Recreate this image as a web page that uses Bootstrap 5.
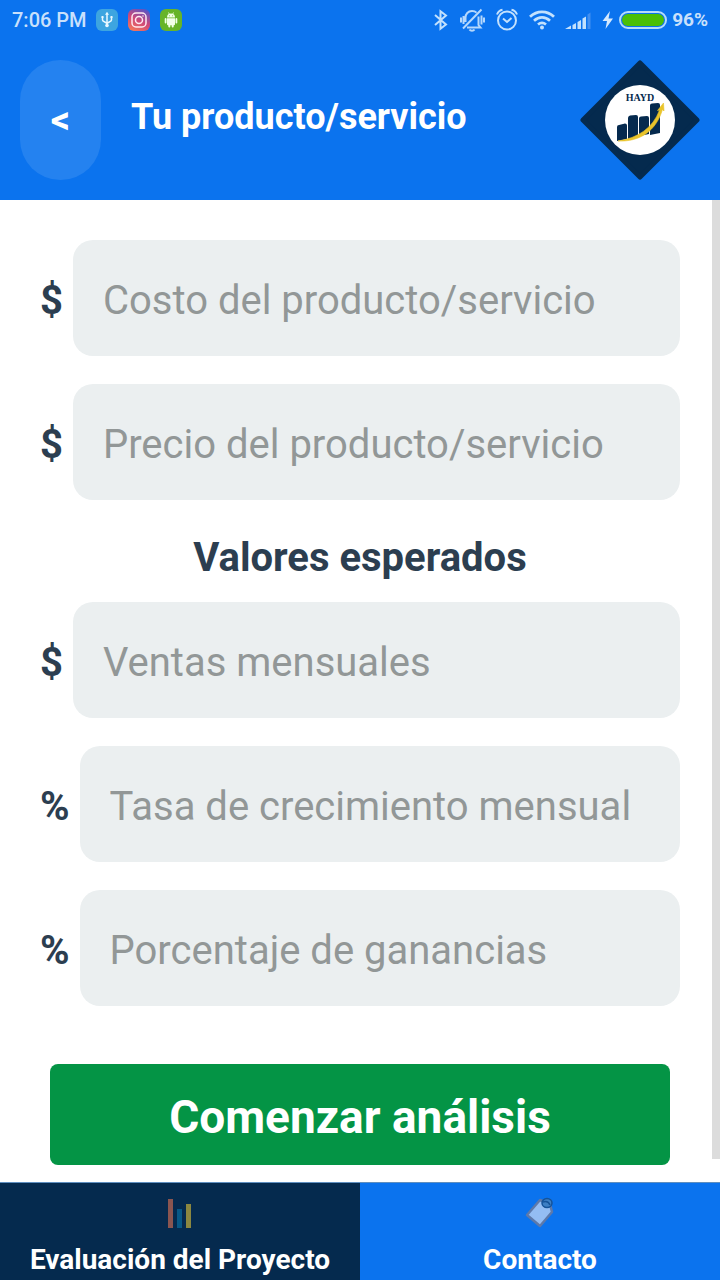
<!DOCTYPE html>
<html lang="es">
<head>
<meta charset="utf-8">
<meta name="viewport" content="width=device-width, initial-scale=1">
<title>Tu producto/servicio</title>
<link href="https://cdn.jsdelivr.net/npm/bootstrap@5.3.0/dist/css/bootstrap.min.css" rel="stylesheet">
<style>
  :root { --azul: #0b73ee; --marino: #052a4e; --tinta: #2c3e50; }
  body { font-family: Roboto, "Noto Sans", sans-serif; color: var(--tinta); background: #fff; }
  .top-area { background: var(--azul); color: #fff; }
  .status-bar { height: 40px; padding: 0 12px; font-size: 20px; line-height: 40px; font-weight: 500; color: #c9e0fb; }
  .status-bar svg { display: block; flex: none; }
  .status-group { gap: 8px; }
  .status-icons { gap: 10px; }
  .battery-level { font-size: 19px; font-weight: 700; }
  .battery { gap: 5px; }
  .app-bar { padding: 20px; gap: 30px; }
  .back-btn { width: 81px; height: 120px; border-radius: 41px; background: #2482f0; color: #fff; font-size: 38px; line-height: 40px; font-weight: 700; }
  .back-btn:hover { background: #3a8ff2; color: #fff; }
  .screen-title { font-size: 36px; line-height: 48px; font-weight: 700; padding-bottom: 6px; }
  .form-area { padding: 40px 40px 17px; }
  .scroll-thumb { width: 8px; top: 0; right: 0; bottom: 23px; background: #dcdcdc; }
  .field-row { gap: 10px; margin-bottom: 28px; }
  .field-row label { font-size: 40px; line-height: 48px; font-weight: 700; padding-top: 6px; }
  .field-row .form-control { height: 116px; padding: 4px 30px 0; border: 0; border-radius: 20px; background: #ebeff0; color: var(--tinta); font-size: 40px; line-height: 48px; }
  .field-row .form-control::placeholder { color: #929797; opacity: 1; }
  .section-title { font-size: 40px; line-height: 60px; font-weight: 700; margin-bottom: 14px; }
  .start-btn { height: 101px; border-radius: 8px; background: #049445; color: #fff; font-size: 46px; line-height: 56px; font-weight: 700; padding: 4px 0 0; }
  .start-btn:hover { background: #037f3b; color: #fff; }
  .start-wrap { padding: 30px 10px 0; }
  .tab-bar { border-top: 1px solid #5f8fc0; }
  .tab-link { background: var(--azul); color: #fff; font-size: 28px; line-height: 36px; font-weight: 700; padding: 12px 0 2px; gap: 11px; }
  .tab-link.active { background: var(--marino); }
</style>
</head>
<body class="d-flex flex-column min-vh-100">
<header class="top-area">
  <div class="status-bar d-flex align-items-center justify-content-between">
    <div class="status-group d-flex align-items-center">
      <span>7:06 PM</span>
      <svg width="24" height="24" viewBox="0 0 24 24" fill="none" stroke="#e8f8ff" stroke-width="1.5"><rect x="1" y="1" width="22" height="22" rx="6" fill="#3da5e0" stroke="none"/><path d="M12 6v11M7.500 9v3c0 2 4.500 2 4.500 4M16.500 9v3c0 2-4.500 2-4.500 4"/><path d="M12 3.800l2 3h-4zM6.500 8h2v2h-2zM15.500 8h2v2h-2z" fill="#e8f8ff" stroke="none"/><circle cx="12" cy="17.500" r="1.800" fill="#e8f8ff" stroke="none"/></svg>
      <svg width="24" height="24" viewBox="0 0 24 24" fill="none" stroke="#ffe9f0" stroke-width="1.500"><defs><linearGradient id="ig" x1=".2" y1="1" x2=".7" y2="0"><stop offset="0" stop-color="#f5785a"/><stop offset=".5" stop-color="#ce4879"/><stop offset="1" stop-color="#5a55c4"/></linearGradient></defs><rect x="1" y="1" width="22" height="22" rx="6" fill="url(#ig)" stroke="none"/><rect x="5" y="5" width="14" height="14" rx="4"/><circle cx="12" cy="12" r="3.500"/><circle cx="16" cy="8" r=".8" fill="#ffe9f0" stroke="none"/></svg>
      <svg width="24" height="24" viewBox="0 0 24 24" fill="#f2ffe8"><rect x="1" y="1" width="22" height="22" rx="6" fill="#67b428"/><path d="M8 9.500a4 4 0 0 1 8 0zM8 10.200h8v6a1 1 0 0 1-1 1H9a1 1 0 0 1-1-1z"/><rect x="5.700" y="10" width="1.800" height="5.500" rx=".9"/><rect x="16.500" y="10" width="1.800" height="5.500" rx=".9"/><rect x="9.300" y="15.500" width="2" height="4" rx="1"/><rect x="12.700" y="15.500" width="2" height="4" rx="1"/><path d="M9.500 4.500l1 2M14.500 4.500l-1 2" stroke="#f2ffe8" stroke-width=".8"/><circle cx="10.400" cy="7.800" r=".5" fill="#67b428"/><circle cx="13.600" cy="7.800" r=".5" fill="#67b428"/></svg>
    </div>
    <div class="status-icons d-flex align-items-center">
      <svg width="16" height="24" viewBox="0 0 16 24" fill="none" stroke="#c3e1fd" stroke-width="2"><path d="M2 7l11 9.500-5.500 4.300V3.200L13 7.500 2 17"/></svg>
      <svg width="26" height="24" viewBox="0 0 26 24" fill="none" stroke="#b5d8fc" stroke-width="2"><path d="M6.500 14V9.500C6.500 6 9 3 13 3c2 0 3.500.6 4.500 1.600M19.500 8.500V17l2 2.500H8M22.500 1.500L4 20.500M10.500 21.500c1 1.500 4 1.500 5 0M4.500 8v8M2 9.500v5M22.500 7.500v9M25 9.500v5"/></svg>
      <svg width="24" height="24" viewBox="0 0 24 24" fill="none" stroke="#c3e1fd" stroke-width="2"><circle cx="12" cy="12.500" r="9"/><path d="M8 10.500l4 3.500 4.500-4M2 6.500C3 4 5 2.200 7.500 1.800M22 6.500C21 4 19 2.200 16.500 1.800"/></svg>
      <svg width="26" height="24" viewBox="1 0 26 24" fill="none" stroke="#c3e1fd" stroke-width="2.800"><path d="M2 8.800C9 2.200 19 2.200 26 8.800M6 12.700c5-4.300 11-4.300 16 0M10 16.500c2.500-2 5.500-2 8 0"/><circle cx="14" cy="19.500" r="2" fill="#c3e1fd" stroke="none"/></svg>
      <svg width="27" height="24" viewBox="0 0 27 24" fill="#c3e1fd"><path d="M0 21l6-3.500V21zM7.500 17l3.500-2v6H7.500zM12.500 14l3.500-2v9h-3.500zM17.500 10.500l3.500-2V21h-3.500z"/><path d="M22.500 6.500l3-2V21h-3z" fill="#438ff0"/></svg>
      <div class="battery d-flex align-items-center">
        <svg width="12" height="24" viewBox="2 0 12 24" fill="#d5e9fe"><path d="M10 3L2.500 13H7l-1.500 8L13 10.500H8.500z"/></svg>
        <svg width="48" height="24" viewBox="1 0 48 24"><rect x="2" y="4" width="46" height="16" rx="8" fill="none" stroke="#b5dcfb" stroke-width="2"/><rect x="4" y="6" width="42" height="12" rx="6" fill="#4abf06"/></svg>
        <span class="battery-level">96%</span>
      </div>
    </div>
  </div>
  <div class="app-bar d-flex align-items-center">
    <button type="button" class="btn back-btn border-0 p-0 flex-shrink-0" aria-label="Volver">&lt;</button>
    <h1 class="screen-title flex-grow-1 mb-0">Tu producto/servicio</h1>
    <svg class="flex-shrink-0" width="120" height="120" viewBox="0 0 120 120" role="img" aria-label="HAYD">
      <path d="M60 3L117 60 60 117 3 60z" fill="#052a4e" stroke="#052a4e" stroke-width="5" stroke-linejoin="round"/>
      <circle cx="60" cy="60" r="35" fill="#fff"/>
      <text x="60" y="41" text-anchor="middle" font-family="Liberation Serif, serif" font-weight="700" font-size="10" fill="#052a4e">HAYD</text>
      <path d="M37 67q0-2 2-2l6-1.500q2 0 2 2V79l-10 2zM48 58q0-2 2-2.500l6-.5q2 0 2 2v20l-10 2zM59 58.500q0-2 2-2l6-.5q2 0 2 2v16l-10 2zM70 45.500q0-2 2-2l6-.5q2 0 2 2v28l-10 2z" fill="#052a4e"/>
      <path d="M38 81C58 78 73 68 79.500 50l-2 .5L83.500 43 84 51l-1.500-1.500C76 71 60 82 38 81z" fill="#eac42a" stroke="#eac42a" stroke-width=".6"/>
    </svg>
  </div>
</header>

<main class="form-area position-relative flex-grow-1">
  <form>
    <div class="field-row d-flex align-items-center">
      <label for="costo">$</label>
      <input id="costo" type="text" inputmode="decimal" class="form-control" placeholder="Costo del producto/servicio">
    </div>
    <div class="field-row d-flex align-items-center">
      <label for="precio">$</label>
      <input id="precio" type="text" inputmode="decimal" class="form-control" placeholder="Precio del producto/servicio">
    </div>
    <h2 class="section-title text-center">Valores esperados</h2>
    <div class="field-row d-flex align-items-center">
      <label for="ventas">$</label>
      <input id="ventas" type="text" inputmode="decimal" class="form-control" placeholder="Ventas mensuales">
    </div>
    <div class="field-row d-flex align-items-center">
      <label for="tasa">%</label>
      <input id="tasa" type="text" inputmode="decimal" class="form-control" placeholder="Tasa de crecimiento mensual">
    </div>
    <div class="field-row d-flex align-items-center">
      <label for="ganancias">%</label>
      <input id="ganancias" type="text" inputmode="decimal" class="form-control" placeholder="Porcentaje de ganancias">
    </div>
    <div class="start-wrap">
      <button type="submit" class="btn start-btn d-block border-0 w-100">Comenzar análisis</button>
    </div>
  </form>
  <div class="scroll-thumb position-absolute"></div>
</main>

<nav class="tab-bar row g-0">
  <a href="#evaluacion" class="tab-link active col-6 d-flex flex-column align-items-center text-decoration-none" aria-current="page">
    <svg width="32" height="36" viewBox="0 0 32 36"><path d="M4 4h5v29H4z" fill="#8a5550"/><path d="M13 14h5v19h-5z" fill="#075886"/><path d="M22 9h5v24h-5z" fill="#8b8740"/></svg>
    <span>Evaluación del Proyecto</span>
  </a>
  <a href="#contacto" class="tab-link col-6 d-flex flex-column align-items-center text-decoration-none">
    <svg width="32" height="36" viewBox="0 0 32 36"><path d="M16 5l10 4 2 8-12 14L3 20z" fill="#94bdf3" stroke="#5d79aa" stroke-width="2.500" stroke-linejoin="round"/><ellipse cx="23" cy="8" rx="5" ry="4.500" fill="#3d7fc4" stroke="#155399" stroke-width="1.500"/><path d="M19 7q5-2 7 3" fill="none" stroke="#155399" stroke-width="1.500"/></svg>
    <span>Contacto</span>
  </a>
</nav>
<script src="https://cdn.jsdelivr.net/npm/bootstrap@5.3.0/dist/js/bootstrap.bundle.min.js"></script>
</body>
</html>
